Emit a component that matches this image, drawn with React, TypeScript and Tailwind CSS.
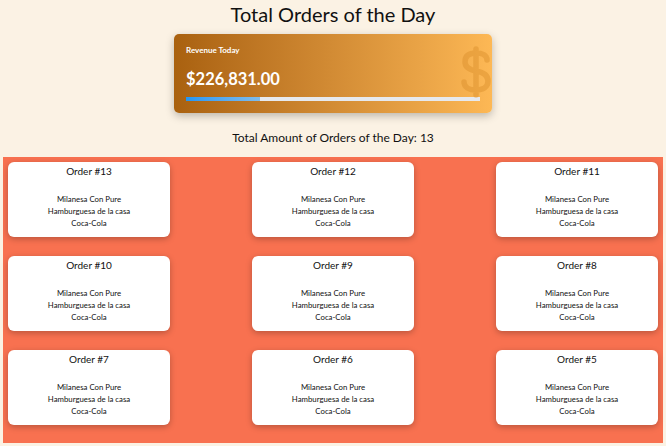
import React from "react";

const orders = [13, 12, 11, 10, 9, 8, 7, 6, 5];
const items = ["Milanesa Con Pure", "Hamburguesa de la casa", "Coca-Cola"];

export default function App() {
  return (
    <div className="w-[666px] h-[446px] bg-[#fbf2e4] overflow-hidden text-black" style={{ fontFamily: "Lato, 'Open Sans', sans-serif" }}>
      <div className="flex flex-col items-center pt-[1px]">
        <h1 className="text-[20px] leading-[26px] font-normal text-[#111]">Total Orders of the Day</h1>
        <div className="mt-[7px] relative w-[318px] h-[79px] rounded-[5px] bg-gradient-to-r from-[#a9610f] to-[#fdb855] shadow-[0_3px_8px_rgba(0,0,0,0.25)] overflow-hidden px-[12px] pt-[11px]">
          <div className="text-[8px] leading-[10px] font-bold text-white">Revenue Today</div>
          <div className="mt-[14px] text-[16.5px] leading-[20px] font-bold text-white">$226,831.00</div>
          <div className="mt-[8px] h-[4px] w-[294px] bg-[#e6e9ee]">
            <div className="h-full w-[25%] bg-gradient-to-r from-[#2196f3] to-[#7fbcea]" />
          </div>
          <svg className="absolute right-[0px] top-[12px]" width="32" height="52" viewBox="0 0 32 52" fill="none">
            <path d="M16 3 V49 M27 14 C27 9 22 7 16 7 C9 7 5 10 5 16 C5 22 11 24 16 25 C22 26 28 28 28 35 C28 41 23 44 16 44 C9 44 4 41 4 36" stroke="#d98f2a" strokeOpacity="0.45" strokeWidth="5.5" strokeLinecap="round" />
          </svg>
        </div>
        <div className="mt-[17px] text-[12px] leading-[16px] text-[#111]">Total Amount of Orders of the Day: 13</div>
      </div>
      <div className="mt-[11px] mx-[3px] bg-[#f87150] pt-[5px] px-[5px] pb-[18px] grid grid-cols-[162px_162px_162px] justify-between gap-y-[19px]">
        {orders.map((n) => (
          <div key={n} className="h-[75px] bg-white rounded-[6px] shadow-[0_2px_6px_rgba(0,0,0,0.25)] flex flex-col items-center pt-[2px]">
            <div className="text-[10px] leading-[15px] text-[#111]">Order #{n}</div>
            <div className="mt-[14px] flex flex-col items-center">
              {items.map((it) => (
                <div key={it} className="text-[7.8px] leading-[12px] text-[#111]">{it}</div>
              ))}
            </div>
          </div>
        ))}
      </div>
    </div>
  );
}
